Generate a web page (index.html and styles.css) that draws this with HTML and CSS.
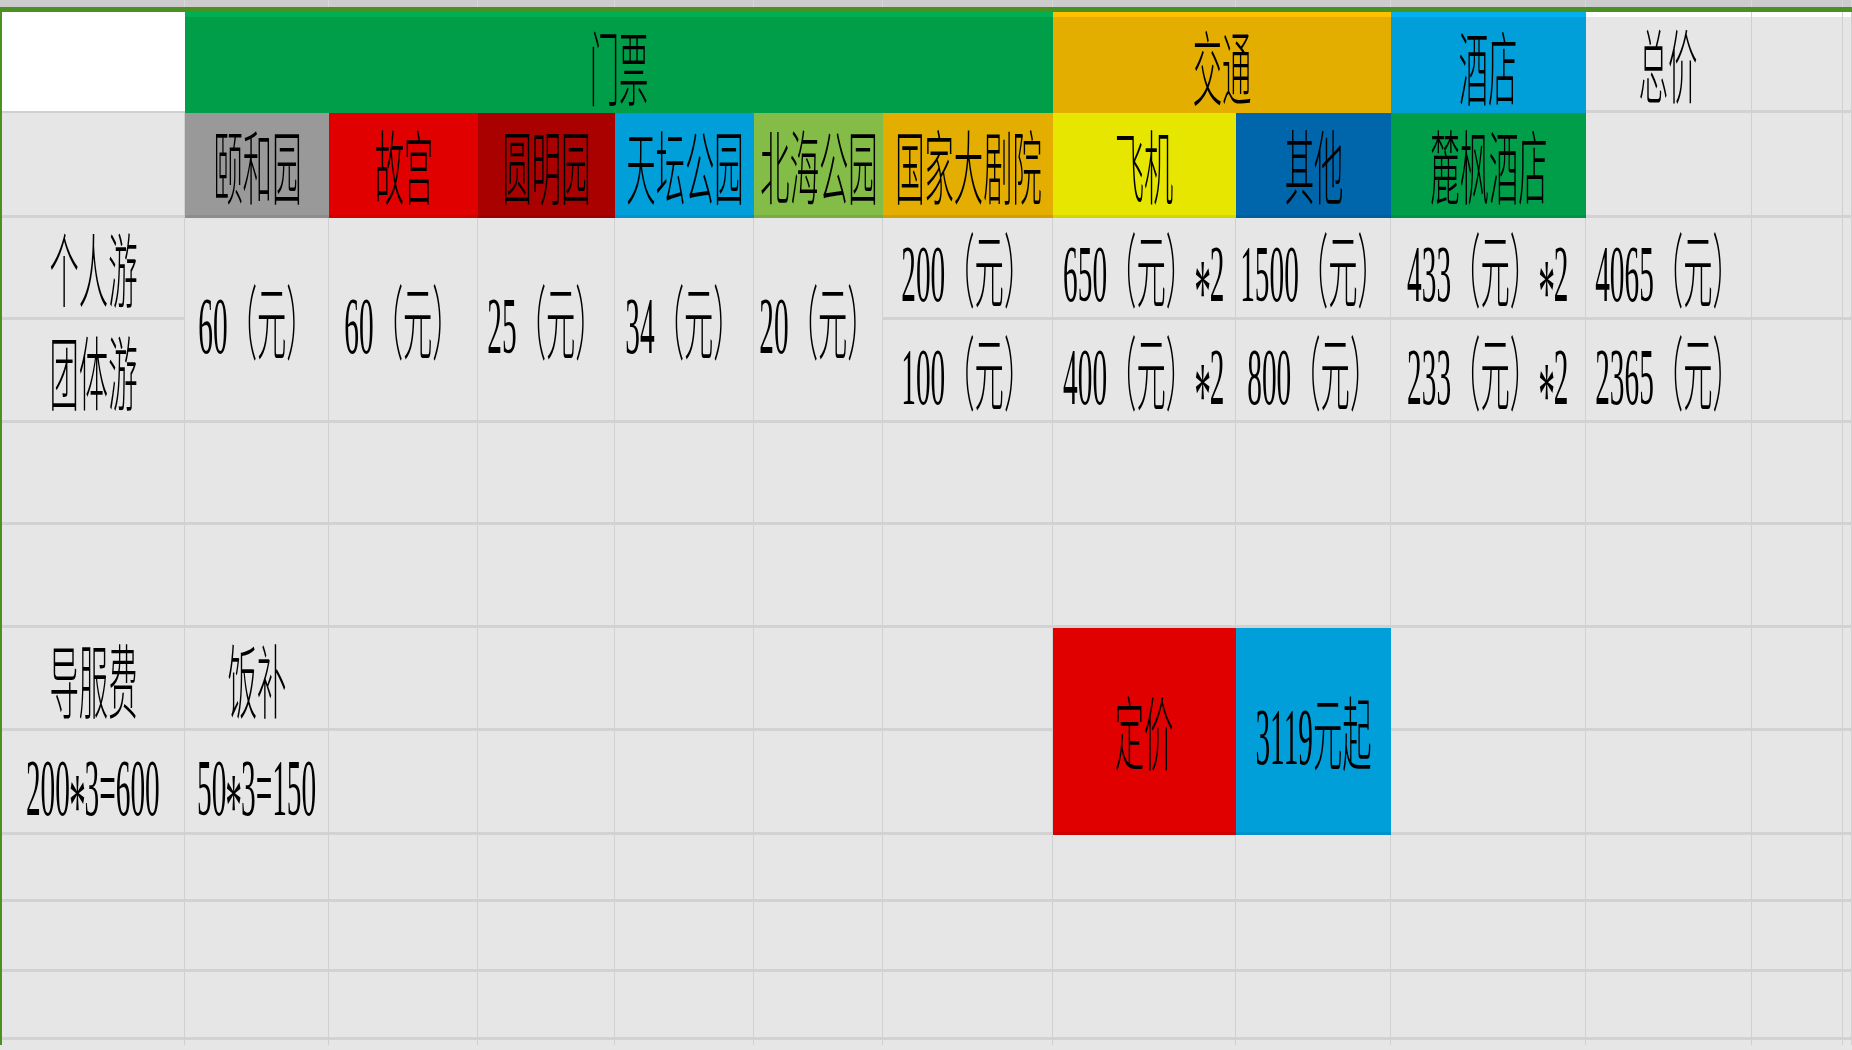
FILE: index.html
```html
<!DOCTYPE html>
<html lang="zh-CN">
<head>
<meta charset="utf-8">
<title>北京旅游报价</title>
<link rel="stylesheet" href="styles.css">
</head>
<body>
<div class="strip">
  <div class="sc"></div><div class="sc"></div><div class="sc"></div><div class="sc"></div><div class="sc"></div><div class="sc"></div><div class="sc"></div><div class="sc"></div><div class="sc"></div><div class="sc"></div><div class="sc"></div><div class="sc"></div><div class="sc"></div>
</div>
<div class="sheet">
  <!-- row 1 -->
  <div class="c corner"></div>
  <div class="c band span6 g-dark band-green"><span class="t">门票</span></div>
  <div class="c band span2 orange band-orange"><span class="t">交通</span></div>
  <div class="c band blue band-blue"><span class="t">酒店</span></div>
  <div class="c band band-white"><span class="t">总价</span></div>
  <div class="c band band-white"></div>
  <div class="c band band-white"></div>
  <!-- row 2 -->
  <div class="c"></div>
  <div class="c fill gray"><span class="t">颐和园</span></div>
  <div class="c fill red"><span class="t">故宫</span></div>
  <div class="c fill maroon"><span class="t">圆明园</span></div>
  <div class="c fill blue"><span class="t">天坛公园</span></div>
  <div class="c fill lime"><span class="t">北海公园</span></div>
  <div class="c fill orange"><span class="t">国家大剧院</span></div>
  <div class="c fill yellow"><span class="t">飞机</span></div>
  <div class="c fill navy"><span class="t">其他</span></div>
  <div class="c fill g-dark"><span class="t">麓枫酒店</span></div>
  <div class="c"></div>
  <div class="c"></div>
  <div class="c"></div>
  <!-- row 3 -->
  <div class="c"><span class="t">个人游</span></div>
  <div class="c tall"><span class="t">60（元）</span></div>
  <div class="c tall"><span class="t">60（元）</span></div>
  <div class="c tall"><span class="t">25（元）</span></div>
  <div class="c tall"><span class="t">34（元）</span></div>
  <div class="c tall"><span class="t">20（元）</span></div>
  <div class="c"><span class="t">200（元）</span></div>
  <div class="c"><span class="t">650（元）<span class="ast">*</span>2</span></div>
  <div class="c"><span class="t">1500（元）</span></div>
  <div class="c"><span class="t">433（元）<span class="ast">*</span>2</span></div>
  <div class="c"><span class="t">4065（元）</span></div>
  <div class="c"></div>
  <div class="c"></div>
  <!-- row 4 -->
  <div class="c"><span class="t">团体游</span></div>
  <div class="c"><span class="t">100（元）</span></div>
  <div class="c"><span class="t">400（元）<span class="ast">*</span>2</span></div>
  <div class="c"><span class="t">800（元）</span></div>
  <div class="c"><span class="t">233（元）<span class="ast">*</span>2</span></div>
  <div class="c"><span class="t">2365（元）</span></div>
  <div class="c"></div>
  <div class="c"></div>
  <!-- row 5 -->
  <div class="c"></div><div class="c"></div><div class="c"></div><div class="c"></div><div class="c"></div><div class="c"></div><div class="c"></div><div class="c"></div><div class="c"></div><div class="c"></div><div class="c"></div><div class="c"></div><div class="c"></div>
  <!-- row 6 -->
  <div class="c"></div><div class="c"></div><div class="c"></div><div class="c"></div><div class="c"></div><div class="c"></div><div class="c"></div><div class="c"></div><div class="c"></div><div class="c"></div><div class="c"></div><div class="c"></div><div class="c"></div>
  <!-- row 7 -->
  <div class="c"><span class="t">导服费</span></div>
  <div class="c"><span class="t">饭补</span></div>
  <div class="c"></div><div class="c"></div><div class="c"></div><div class="c"></div><div class="c"></div>
  <div class="c tall fill red"><span class="t">定价</span></div>
  <div class="c tall fill blue"><span class="t">3119元起</span></div>
  <div class="c"></div><div class="c"></div><div class="c"></div><div class="c"></div>
  <!-- row 8 -->
  <div class="c"><span class="t">200<span class="ast">*</span>3=600</span></div>
  <div class="c"><span class="t">50<span class="ast">*</span>3=150</span></div>
  <div class="c"></div><div class="c"></div><div class="c"></div><div class="c"></div><div class="c"></div>
  <div class="c"></div><div class="c"></div><div class="c"></div><div class="c"></div>
  <!-- rows 9-12 -->
  <div class="c"></div><div class="c"></div><div class="c"></div><div class="c"></div><div class="c"></div><div class="c"></div><div class="c"></div><div class="c"></div><div class="c"></div><div class="c"></div><div class="c"></div><div class="c"></div><div class="c"></div>
  <div class="c"></div><div class="c"></div><div class="c"></div><div class="c"></div><div class="c"></div><div class="c"></div><div class="c"></div><div class="c"></div><div class="c"></div><div class="c"></div><div class="c"></div><div class="c"></div><div class="c"></div>
  <div class="c"></div><div class="c"></div><div class="c"></div><div class="c"></div><div class="c"></div><div class="c"></div><div class="c"></div><div class="c"></div><div class="c"></div><div class="c"></div><div class="c"></div><div class="c"></div><div class="c"></div>
  <div class="c"></div><div class="c"></div><div class="c"></div><div class="c"></div><div class="c"></div><div class="c"></div><div class="c"></div><div class="c"></div><div class="c"></div><div class="c"></div><div class="c"></div><div class="c"></div><div class="c"></div>
</div>
</body>
</html>
```

FILE: styles.css
```css
html, body {
  margin: 0;
  padding: 0;
  width: 1852px;
  height: 1050px;
  overflow: hidden;
  background: #e6e6e6;
}

.strip {
  display: grid;
  grid-template-columns: 185px 144px 149px 137px 139px 129px 170px 183px 155px 195px 166px 91px 1fr;
  height: 7px;
  background: #cccccc;
}

.sc {
  border-right: 1px solid #d8d8d8;
  box-sizing: border-box;
}

.sheet {
  display: grid;
  grid-template-columns: 183px 144px 149px 137px 139px 129px 170px 183px 155px 195px 166px 91px 1fr;
  grid-template-rows: 101px 105px 102px 103px 102px 103px 103px 104px 67px 70px 68px 68px;
  height: 1038px;
  overflow: hidden;
  box-sizing: border-box;
  border-top: 5px solid #4a9022;
  border-left: 2px solid #4a9022;
  background: #e6e6e6;
}

.c {
  box-sizing: border-box;
  background: #e6e6e6;
  border-right: 1px solid #d0d0d0;
  border-bottom: 3px solid #d2d2d2;
  display: flex;
  align-items: center;
  justify-content: center;
  padding-top: 14px;
  min-width: 0;
  overflow: visible;
}

.t {
  display: inline-block;
  flex-shrink: 0;
  white-space: nowrap;
  font-family: "Liberation Serif", "Noto Sans CJK SC", serif;
  font-size: 81px;
  font-weight: 300;
  line-height: 1;
  color: #000;
  transform: scaleX(0.362);
}

.ast {
  display: inline-block;
  transform: translateY(18px) scale(1.15);
}

.corner {
  background: #ffffff;
  border-right: none;
  border-bottom: 2px solid #d0d0d0;
}

.span6 { grid-column: span 6; }
.span2 { grid-column: span 2; }
.tall { grid-row: span 2; }

.band {
  padding-top: 19px;
}
.band-green { box-shadow: inset 0 5px 0 #00b050; }
.band-orange { box-shadow: inset 0 5px 0 #ffc000; }
.band-blue { box-shadow: inset 0 5px 0 #00b0f0; }
.band-white { box-shadow: inset 0 5px 0 #ffffff; }

.g-dark, .orange, .blue, .gray, .red, .maroon, .lime, .yellow, .navy {
  border-right: none;
}
.band.g-dark, .band.orange, .band.blue {
  border-bottom: none;
}

.fill {
  border-bottom: 3px solid rgba(0, 0, 0, 0.08);
}

.g-dark { background: #009e49; }
.orange { background: #e3ae00; }
.blue { background: #009fd9; }
.gray { background: #999999; }
.red { background: #e10000; }
.maroon { background: #a90000; }
.lime { background: #84bc48; }
.yellow { background: #e6e600; }
.navy { background: #0066ab; }
```
